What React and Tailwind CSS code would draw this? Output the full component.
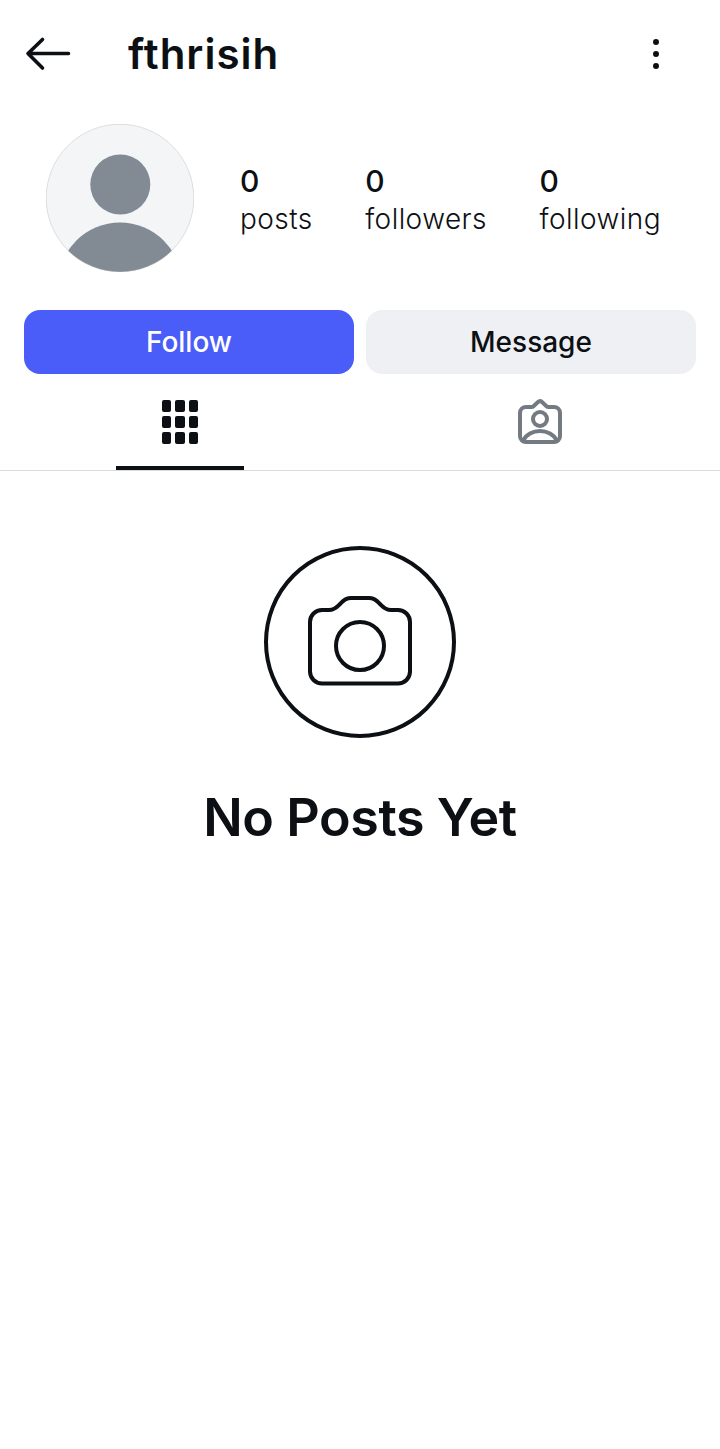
export default function App() {
  return (
    <div className="min-h-[1449px] w-[720px] bg-white text-[#0c1014] font-['Inter','Liberation_Sans',sans-serif]">
      <header className="flex h-[108px] items-center pl-6 pr-[60px]">
        <svg width="48" height="48" viewBox="0 0 48 48" fill="none" stroke="#0c1014" strokeWidth="3.600" strokeLinecap="round" strokeLinejoin="round" className="shrink-0">
          <path d="M44.500 23.500H4M18.500 38 4 23.500 18.500 9.500" />
        </svg>
        <h1 className="ml-14 flex-1 text-[42px] font-semibold leading-none tracking-[1px]">fthrisih</h1>
        <svg width="8" height="32" viewBox="0 0 8 32" fill="#0c1014">
          <circle cx="4" cy="4" r="3" /><circle cx="4" cy="16" r="3" /><circle cx="4" cy="28" r="3" />
        </svg>
      </header>

      <section className="mt-4 flex h-[148px] items-center pl-[46px]">
        <svg width="148" height="148" viewBox="0 0 148 148" className="shrink-0">
          <defs><clipPath id="av"><circle cx="74" cy="74" r="74" /></clipPath></defs>
          <g clipPath="url(#av)">
            <rect width="148" height="148" fill="#f3f5f7" />
            <circle cx="74.300" cy="60.500" r="30" fill="#828a94" />
            <circle cx="74" cy="160.500" r="62" fill="#828a94" />
          </g>
          <circle cx="74" cy="74" r="73.800" fill="none" stroke="#b4b8bc" strokeWidth="0.400" />
        </svg>
        <div className="ml-[46px] mt-1 flex gap-[52.500px] text-[28px] leading-[38px]">
          <div><div className="text-[30px] font-medium">0</div><div className="font-light tracking-[0.450px]">posts</div></div>
          <div><div className="text-[30px] font-medium">0</div><div className="font-light tracking-[0.450px]">followers</div></div>
          <div><div className="text-[30px] font-medium">0</div><div className="font-light tracking-[0.450px]">following</div></div>
        </div>
      </section>

      <div className="mt-[38px] flex gap-3 px-6">
        <button className="h-16 flex-1 rounded-2xl bg-[#4a5df9] text-[28px] font-medium text-white">Follow</button>
        <button className="h-16 flex-1 rounded-2xl bg-[#eff0f4] text-[28px] font-medium">Message</button>
      </div>

      <div className="flex h-[97px] border-b border-[#dbdbdb]">
        <div className="flex flex-1 justify-center">
          <div className="flex h-[96px] w-32 items-start justify-center border-b-4 border-[#0c1014] pt-[26px]">
            <div className="grid grid-cols-3 gap-x-1 gap-y-1">
              {Array.from({ length: 9 }).map((_, i) => (
                <div key={i} className="h-3 w-[9.330px] rounded-[2px] bg-[#0c1014]" />
              ))}
            </div>
          </div>
        </div>
        <div className="flex flex-1 justify-center pt-[25px]">
          <svg width="44" height="46" viewBox="0 0 44 46" fill="none" stroke="#737a82" strokeWidth="4" strokeLinejoin="round" strokeLinecap="round">
            <path d="M8 8h5.500a3 3 0 0 0 2-.8L20 3a3 3 0 0 1 4 0l4.500 4.200a3 3 0 0 0 2 .8H36a6 6 0 0 1 6 6v23a6 6 0 0 1-6 6H8a6 6 0 0 1-6-6V14a6 6 0 0 1 6-6Z" />
            <circle cx="22" cy="20" r="7" />
            <path d="M5 42c3-6.500 10-10 17-10s14 3.500 17 10" />
          </svg>
        </div>
      </div>

      <div className="flex flex-col items-center">
        <svg width="192" height="192" viewBox="0 0 192 192" fill="none" stroke="#0c1014" strokeWidth="4" strokeLinejoin="round" className="mt-[75px]">
          <circle cx="96" cy="96" r="94" />
          <path d="M58 64h7C71 64 73 61 76 58C79 55 81 52 87 52H105C111 52 113 55 116 58C119 61 121 64 127 64H134a12 12 0 0 1 12 12V125.500a12 12 0 0 1-12 12H58a12 12 0 0 1-12-12V76a12 12 0 0 1 12-12Z" />
          <circle cx="96" cy="100" r="24" />
        </svg>
        <h2 className="mt-[48px] text-[52px] font-semibold leading-[64px] tracking-[-0.400px]">No Posts Yet</h2>
      </div>
    </div>
  );
}
